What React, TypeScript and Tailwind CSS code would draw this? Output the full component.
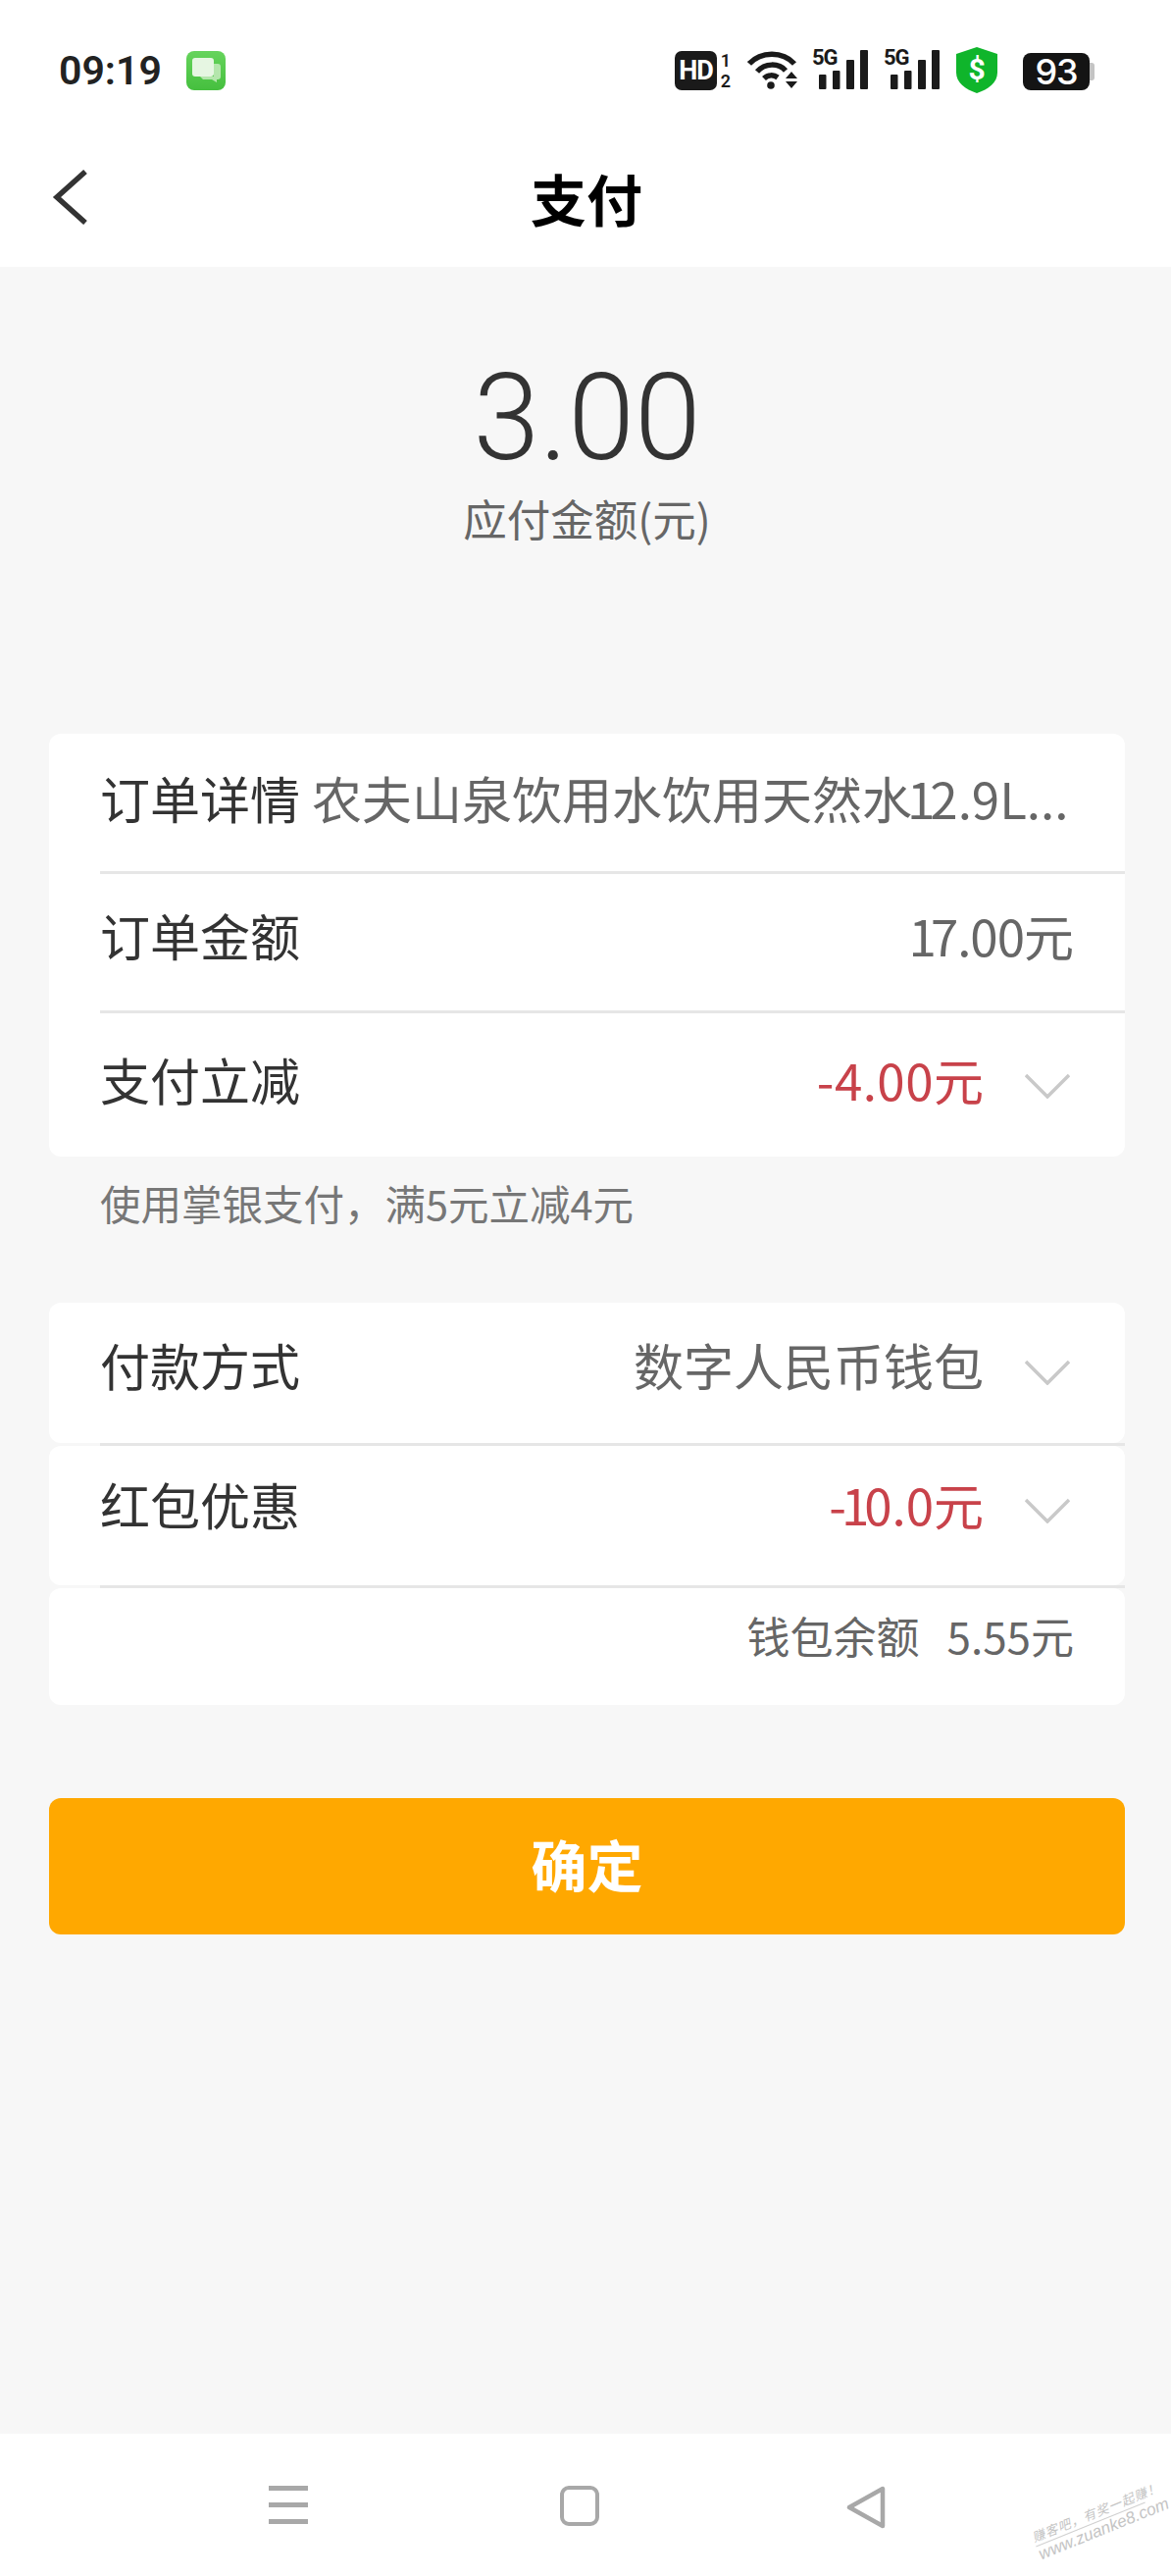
import type { ReactNode } from "react";

const CJK = { fontFamily: '"Noto Sans CJK SC", sans-serif' };

// the reference font has a narrow "1"
function One() {
  return <span className="mx-[-5px]">1</span>;
}

function Signal() {
  return (
    <div className="relative h-[41px] w-[57px]">
      <span className="absolute top-[-3px] left-0 text-[22px] leading-none font-bold tracking-[-1px] text-[#1a1a1a]" style={{ fontFamily: "Roboto, sans-serif" }}>
        5G
      </span>
      <svg width="57" height="41" viewBox="0 0 57 41" fill="#1a1a1a">
        <rect x="7" y="25" width="7.5" height="15" rx="1" />
        <rect x="21" y="21" width="7.5" height="19" rx="1" />
        <rect x="35" y="10" width="8" height="30" rx="1" />
        <rect x="49" y="0" width="8" height="40" rx="1" />
      </svg>
    </div>
  );
}

function StatusBar() {
  return (
    <div className="flex h-[136px] items-start">
      <span className="ml-[60px] mt-[47px] w-[105px] text-[41px] leading-[50px] font-semibold text-[#222]" style={{ fontFamily: "Roboto, sans-serif" }}>
        09:19
      </span>
      <svg className="ml-[25px] mt-[52px]" width="40" height="40" viewBox="0 0 40 40">
        <defs>
          <linearGradient id="msg" x1="0" y1="0" x2="0" y2="1">
            <stop offset="0" stopColor="#66d45c" />
            <stop offset="1" stopColor="#45bf3e" />
          </linearGradient>
        </defs>
        <rect width="40" height="40" rx="8" fill="url(#msg)" />
        <rect x="6" y="7" width="22" height="19" rx="3" fill="#e6f6e2" />
        <path d="M28 13h4a3 3 0 0 1 3 3v10a3 3 0 0 1-3 3h-1v3l-5-3h-9l-3-3h14z" fill="#b4e6ac" />
      </svg>
      <div className="ml-auto mr-[78px] mt-[48px] flex items-start">
        <div className="mt-[4px] flex h-[40px] w-[43px] items-center justify-center rounded-[7px] bg-[#1a1a1a] text-[27px] leading-none font-bold tracking-[-1px] text-white" style={{ fontFamily: "Roboto, sans-serif" }}>
          HD
        </div>
        <div className="mt-[3px] ml-[4px] flex w-[10px] flex-col items-center text-[18px] leading-[21px] font-semibold text-[#1a1a1a]" style={{ fontFamily: "Roboto, sans-serif" }}>
          <span>1</span>
          <span>2</span>
        </div>
        <svg className="mt-[3px] ml-[17px]" width="51" height="41" viewBox="0 0 51 41" fill="none" stroke="#1a1a1a" strokeWidth="5.5">
          <path d="M2 14C14 1 36 1 48 14" />
          <path d="M10 22C18 13 32 13 39 21" />
          <path d="M17 29c4-4 10-4 14-1" />
          <circle cx="24" cy="36" r="3.8" fill="#1a1a1a" stroke="none" />
          <path d="M39 29l6-7 6 7zM39 32l6 7 6-7z" fill="#1a1a1a" stroke="none" />
        </svg>
        <div className="mt-[3px] ml-[15px]">
          <Signal />
        </div>
        <div className="mt-[3px] ml-[16px]">
          <Signal />
        </div>
        <svg className="ml-[17px]" width="42" height="47" viewBox="0 0 42 47">
          <path d="M21 0l21 7v19c0 10-9 17-21 21C9 43 0 36 0 26V7z" fill="#0fb52b" />
          <text x="21" y="33" textAnchor="middle" fontFamily="Roboto, sans-serif" fontWeight="700" fontSize="30" fill="#fff">$</text>
        </svg>
        <div className="mt-[6px] ml-[26px] flex items-center">
          <div className="flex h-[38px] w-[68px] items-center justify-center rounded-[8px] bg-[#141414] text-[36px] leading-none font-medium tracking-[-1px] text-white" style={{ fontFamily: "Inter, sans-serif" }}>
            93
          </div>
          <div className="h-[18px] w-[5px] rounded-r-[3px] bg-[#c4c4c4]" />
        </div>
      </div>
    </div>
  );
}

function Header() {
  return (
    <div className="relative flex h-[136px] items-center justify-center pb-[6px] pl-[2px]">
      <svg className="absolute top-[37px] left-[52px]" width="38" height="56" viewBox="0 0 38 56" fill="none" stroke="#333" strokeWidth="5.5">
        <path d="M35 2L6 28l29 26" />
      </svg>
      <span className="text-[57px] leading-none font-bold text-black">支付</span>
    </div>
  );
}

function Chevron() {
  return (
    <svg className="mt-[14px] ml-[42px]" width="46" height="26" viewBox="0 0 46 26" fill="none" stroke="#c9c9c9" strokeWidth="3.5">
      <path d="M1 2l22 22L45 2" />
    </svg>
  );
}

function Row(props: { label: string; children: ReactNode; red?: boolean; arrow?: boolean; rowClass: string }) {
  const { label, children, red, arrow, rowClass } = props;
  return (
    <div className={`flex items-center pl-[52px] ${arrow ? "pr-[56px]" : "pr-[52px]"} ${rowClass}`}>
      <span className="text-[51px] leading-none text-[#333]">{label}</span>
      <span className={`ml-auto text-[51px] leading-none ${red ? "text-[#c8424a]" : "text-[#666]"}`}>{children}</span>
      {arrow && <Chevron />}
    </div>
  );
}

function Divider() {
  return <div className="ml-[52px] h-[3px] bg-[#e6e6e6]" />;
}

function NavBar() {
  return (
    <div className="relative flex h-[145px] items-start bg-white pt-[53px] pl-[274px]">
      <div className="flex h-[39px] w-[40px] flex-col justify-between">
        <div className="h-[5px] bg-[#a8a8a8]" />
        <div className="h-[5px] bg-[#a8a8a8]" />
        <div className="h-[5px] bg-[#a8a8a8]" />
      </div>
      <div className="ml-[257px] h-[41px] w-[40px] rounded-[9px] border-[4px] border-[#a8a8a8]" />
      <svg className="ml-[252px]" width="40" height="44" viewBox="0 0 40 44" fill="none" stroke="#a8a8a8" strokeWidth="4.5" strokeLinejoin="round">
        <path d="M37 3v38L3 22z" />
      </svg>
      <div className="absolute top-[74px] right-[22px] w-[120px] -rotate-[22deg] text-[#c4c4c4]">
        <div className="border-b border-[#d0d0d0] text-[13px] leading-[18px] tracking-[1px] whitespace-nowrap italic">赚客吧，有奖一起赚！</div>
        <div className="text-[17px] leading-[18px] whitespace-nowrap italic" style={{ fontFamily: '"Liberation Sans", sans-serif' }}>www.zuanke8.com</div>
      </div>
    </div>
  );
}

export default function App() {
  return (
    <div className="flex h-[2626px] w-[1194px] flex-col overflow-hidden bg-[#f7f7f7]" style={CJK}>
      <div className="bg-white">
        <StatusBar />
        <Header />
      </div>

      <main className="flex-1 pr-[47px] pl-[50px]">
        <div className="flex flex-col items-center pt-[91px]">
          <div className="text-[122px] leading-[128px] font-light text-[#333]" style={{ fontFamily: "Roboto, sans-serif" }}>
            3.00
          </div>
          <div className="mt-[10px] text-[44.5px] leading-[54px] text-[#666]">应付金额(元)</div>
        </div>

        <section className="mt-[193px] rounded-[12px] bg-white">
          <div className="flex h-[140px] items-center pb-[10px] pl-[52px]">
            <span className="shrink-0 text-[51px] leading-none text-[#333]">订单详情</span>
            <span className="ml-[12px] text-[51px] leading-[64px] whitespace-nowrap text-[#666]">
              农夫山泉饮用水饮用天然水<One />2.9L...
            </span>
          </div>
          <Divider />
          <Row label="订单金额" rowClass="h-[139px] pb-[14px]">
            <span className="tracking-[-1px]">
              <One />7.00
            </span>
            元
          </Row>
          <Divider />
          <Row label="支付立减" red arrow rowClass="h-[146px] pb-[12px]">
            <span className="tracking-[0.5px]">-4.00</span>元
          </Row>
        </section>

        <p className="mt-[25px] ml-[52px] text-[41.5px] leading-[44px] text-[#777]">使用掌银支付，满5元立减4元</p>

        <section className="mt-[80px]">
          <div className="rounded-[12px] bg-white">
            <Row label="付款方式" arrow rowClass="h-[143px] pb-[16px]">
              数字人民币钱包
            </Row>
          </div>
          <Divider />
          <div className="rounded-[12px] bg-white">
            <Row label="红包优惠" red arrow rowClass="h-[142px] pb-[24px]">
              -<One />0.0元
            </Row>
          </div>
          <Divider />
          <div className="flex h-[119px] items-center justify-end gap-[28px] rounded-[12px] bg-white pr-[52px] pb-[24px] text-[44px] leading-none text-[#666]">
            <span>钱包余额</span>
            <span>5.55元</span>
          </div>
        </section>

        <button className="mt-[95px] flex h-[139px] w-full items-center justify-center rounded-[12px] bg-[#ffa800] pb-[6px] text-[57px] font-bold text-white">
          确定
        </button>
      </main>

      <NavBar />
    </div>
  );
}
